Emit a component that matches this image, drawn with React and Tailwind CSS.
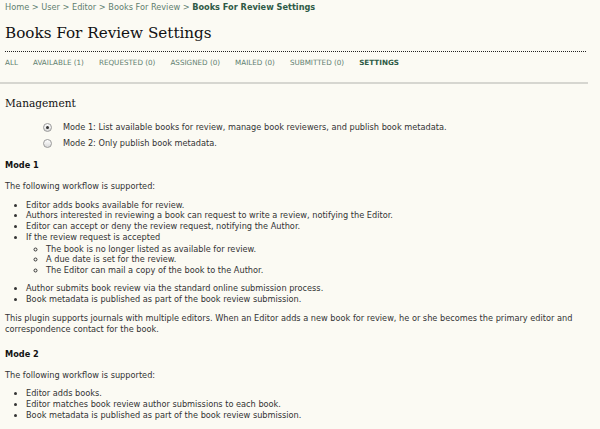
import React from "react";

const sans = { fontFamily: '"DejaVu Sans", Verdana, sans-serif' };
const serif = { fontFamily: '"DejaVu Serif", Georgia, serif' };

const tabs = ["All", "Available (1)", "Requested (0)", "Assigned (0)", "Mailed (0)", "Submitted (0)"];

function Radio({ checked }) {
    return (
        <span className="flex h-[9px] w-[9px] shrink-0 items-center justify-center rounded-full border border-[#9a9a9a] bg-gradient-to-b from-[#ffffff] to-[#d9d9d9]">
            {checked && <span className="h-[3px] w-[3px] rounded-full bg-[#333]" />}
        </span>
    );
}

export default function App() {
    return (
        <div className="min-h-[429px] w-[600px] bg-[#fbfaf3] text-[#333] pl-[5px] pt-[1px]" style={sans}>
            <div className="text-[8.2px] leading-[11px] text-[#5f7f70] pt-[1px]">
                Home &gt; User &gt; Editor &gt; Books For Review &gt; <span className="font-bold text-[#2f5a46]">Books For Review Settings</span>
            </div>
            <h1 className="mt-[8px] text-[15.2px] leading-[24px] text-[#111]" style={serif}>
                Books For Review Settings
            </h1>
            <div className="mt-[6px] mr-[14px] border-t border-dotted border-[#222]" />
            <div className="mt-[6px] flex gap-[15px] text-[7.2px] leading-[10px] uppercase text-[#5f7f70]">
                {tabs.map((t) => (
                    <span key={t}>{t}</span>
                ))}
                <span className="font-bold text-[#2f5a46]">Settings</span>
            </div>
            <div className="-ml-[5px] mt-[14px] mr-[12px] border-t-2 border-[#d6d6d0]" />
            <h2 className="mt-[10px] text-[10.6px] leading-[18px] text-[#111]" style={serif}>
                Management
            </h2>
            <div className="mt-[10px] ml-[38px] flex flex-col gap-[6px] text-[8.2px] leading-[10px]">
                <div className="flex items-center gap-[11px]">
                    <Radio checked />
                    <span>Mode 1: List available books for review, manage book reviewers, and publish book metadata.</span>
                </div>
                <div className="flex items-center gap-[11px]">
                    <Radio />
                    <span>Mode 2: Only publish book metadata.</span>
                </div>
            </div>
            <div className="text-[8.2px] leading-[10.75px]">
                <h3 className="mt-[12px] font-bold text-[#111]">Mode 1</h3>
                <p className="mt-[10px]">The following workflow is supported:</p>
                <ul className="mt-[8px] ml-[21px] list-disc">
                    <li>Editor adds books available for review.</li>
                    <li>Authors interested in reviewing a book can request to write a review, notifying the Editor.</li>
                    <li>Editor can accept or deny the review request, notifying the Author.</li>
                    <li>
                        If the review request is accepted
                        <ul className="mt-[1px] ml-[20px] list-[circle] mb-[7px]">
                            <li>The book is no longer listed as available for review.</li>
                            <li>A due date is set for the review.</li>
                            <li>The Editor can mail a copy of the book to the Author.</li>
                        </ul>
                    </li>
                    <li>Author submits book review via the standard online submission process.</li>
                    <li>Book metadata is published as part of the book review submission.</li>
                </ul>
                <p className="mt-[9px] mr-[10px]">
                    This plugin supports journals with multiple editors. When an Editor adds a new book for review, he or she becomes the primary editor and correspondence contact for the book.
                </p>
                <h3 className="mt-[14px] font-bold text-[#111]">Mode 2</h3>
                <p className="mt-[10px]">The following workflow is supported:</p>
                <ul className="mt-[8px] ml-[21px] list-disc">
                    <li>Editor adds books.</li>
                    <li>Editor matches book review author submissions to each book.</li>
                    <li>Book metadata is published as part of the book review submission.</li>
                </ul>
            </div>
        </div>
    );
}
